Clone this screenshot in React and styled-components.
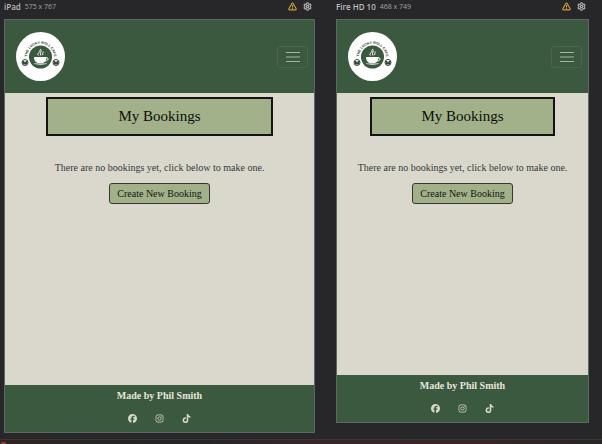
import React from 'react';
import styled, { createGlobalStyle } from 'styled-components';
import { FaFacebook, FaInstagram, FaTiktok } from 'react-icons/fa6';
import { LuTriangleAlert, LuSettings } from 'react-icons/lu';

const GlobalStyle = createGlobalStyle`
  *, *::before, *::after { box-sizing: border-box; }
  body { margin: 0; background: #272729; font-family: "Liberation Serif", serif; }
  h1, h2, p { margin: 0; }
  button { font: inherit; cursor: pointer; }
`;

const Workspace = styled.div`
  min-height: 100vh;
  display: flex;
  flex-direction: column;
  overflow: hidden;
`;

const Devices = styled.main`
  flex: 1;
  display: grid;
  grid-template-columns: 311fr 253fr;
  align-items: start;
  gap: 21px;
  padding: 0 13px 0 4px;
`;

const DeviceBar = styled.div`
  display: flex;
  align-items: center;
  height: 19px;
  padding: 0 3px 6px 0;
  font-family: "Open Sans", sans-serif;
  white-space: nowrap;
`;

const DeviceName = styled.h2`
  font-size: 8px;
  line-height: 12px;
  font-weight: 600;
  color: #bdbdbd;
`;

const DeviceSize = styled.span`
  margin-left: 4px;
  font-size: 7px;
  line-height: 12px;
  color: #a2a2a4;
`;

const DeviceActions = styled.div`
  display: flex;
  gap: 6px;
  margin-left: auto;
`;

const IconButton = styled.button`
  display: flex;
  padding: 0;
  border: 0;
  background: none;
  font-size: 9px;
  color: ${(p) => p.$color};

  svg { stroke-width: 3; }
`;

const Screen = styled.div`
  box-sizing: content-box;
  display: flex;
  flex-direction: column;
  aspect-ratio: ${(p) => p.$ratio};
  border: 1px solid #5d6960;
  background: #dad8cc;
`;

const Header = styled.header`
  display: flex;
  align-items: center;
  justify-content: space-between;
  padding: 12px 6px 12px 11px;
  background: #3a593f;
`;

const LogoLink = styled.a`
  display: block;
  width: 49px;
  height: 49px;
`;

const MenuButton = styled.button`
  display: flex;
  align-items: center;
  justify-content: center;
  width: 31px;
  height: 22px;
  padding: 0;
  border: 1px solid #49664d;
  border-radius: 3px;
  background: none;
  color: #a5b4a5;
`;

const Content = styled.section`
  flex: 1;
  display: flex;
  flex-direction: column;
  align-items: center;
  padding-top: 4px;
`;

const Title = styled.h1`
  box-sizing: content-box;
  width: 70%;
  padding: 8px 3px;
  border: 2px solid #111410;
  background: #a3b18a;
  color: #0b0e09;
  font-size: 15px;
  line-height: 19px;
  font-weight: 400;
  text-align: center;
`;

const Message = styled.p`
  margin: 24px 0 7px;
  font-size: 10px;
  line-height: 16px;
  color: #34383a;
  white-space: nowrap;
`;

const CreateButton = styled.button`
  padding: 2px 7px;
  border: 1px solid #34382f;
  border-radius: 3px;
  background: #a3b18a;
  color: #11150e;
  font-size: 10px;
  line-height: 15px;
`;

const Footer = styled.footer`
  display: flex;
  flex-direction: column;
  align-items: center;
  gap: 11px;
  padding: 3px 0 9px;
  background: #3a593f;
  color: #e6e6dc;
`;

const Credit = styled.p`
  font-size: 10px;
  line-height: 15px;
  font-weight: 700;
`;

const Socials = styled.nav`
  display: flex;
  gap: 18px;
`;

const SocialLink = styled.a`
  display: flex;
  font-size: 9px;
  color: #dad8cc;
`;

const StatusStrip = styled.div`
  display: flex;
  align-items: flex-end;
  height: 5px;
  padding-left: 1px;
  border-top: 1px solid #383638;
  background: linear-gradient(90deg, #2e2521, #252429 33%, #38252a 50%, #392524 80%, #292526);
`;

const StatusDot = styled.span`
  width: 5px;
  height: 2px;
  border-radius: 3px 3px 0 0;
  background: #b13a2e;
`;

function Logo({ id }) {
  return (
    <svg viewBox="0 0 98 98" width="100%" height="100%" role="img" aria-label="The Lucky Roll Cafe">
      <circle cx="49" cy="49" r="49" fill="#fff" />
      <circle cx="49" cy="50" r="23" fill="#3a593f" />
      <path id={id} d="M23 58 A27 27 0 1 1 75 58" fill="none" />
      <text fontFamily="Liberation Sans" fontSize="7" fontWeight="700" fill="#29332b" textAnchor="middle">
        <textPath href={`#${id}`} startOffset="50%">THE LUCKY ROLL CAFE</textPath>
      </text>
      <g fill="#fff">
        <path d="M36 50 H61 C61 56 59 60 54 62 H43 C38 60 36 56 36 50Z" />
        <path d="M60 52 C66 50 66 58 58 58" fill="none" stroke="#fff" strokeWidth="2" />
        <path d="M35 63 H63 C60 66 38 66 35 63Z" />
      </g>
      <path d="M45 47 C40 42 50 42 47 37 M50 47 C46 42 53 40 49 34 M54 46 C51 43 56 42 54 39" fill="none" stroke="#fff" strokeWidth="2" />
      {[18, 80].map((x) => (
        <g key={x}>
          <circle cx={x} cy="61" r="6" fill="#fff" stroke="#35483a" strokeWidth="2" />
          <path d={`M${x - 6} 58 l4 0 l2 3 l2 -3 l4 0 l-2 7 l-8 0z`} fill="#35483a" />
        </g>
      ))}
    </svg>
  );
}

function DevicePreview({ id, name, size, ratio }) {
  return (
    <article>
      <DeviceBar>
        <DeviceName>{name}</DeviceName>
        <DeviceSize>{size}</DeviceSize>
        <DeviceActions>
          <IconButton $color="#c6a13e" aria-label="Warnings"><LuTriangleAlert /></IconButton>
          <IconButton $color="#b2b2b4" aria-label="Settings"><LuSettings /></IconButton>
        </DeviceActions>
      </DeviceBar>
      <Screen $ratio={ratio}>
        <Header>
          <LogoLink href="#home"><Logo id={`${id}-ring`} /></LogoLink>
          <MenuButton aria-label="Toggle navigation">
            <svg width="14" height="12" viewBox="0 0 14 12" stroke="currentColor" strokeWidth="1">
              <path d="M0 1.5H14M0 6H14M0 10.5H14" />
            </svg>
          </MenuButton>
        </Header>
        <Content>
          <Title>My Bookings</Title>
          <Message>There are no bookings yet, click below to make one.</Message>
          <CreateButton>Create New Booking</CreateButton>
        </Content>
        <Footer>
          <Credit>Made by Phil Smith</Credit>
          <Socials>
            <SocialLink href="#facebook" aria-label="Facebook"><FaFacebook /></SocialLink>
            <SocialLink href="#instagram" aria-label="Instagram"><FaInstagram /></SocialLink>
            <SocialLink href="#tiktok" aria-label="TikTok"><FaTiktok /></SocialLink>
          </Socials>
        </Footer>
      </Screen>
    </article>
  );
}

export default function App() {
  return (
    <Workspace>
      <GlobalStyle />
      <Devices>
        <DevicePreview id="ipad" name="iPad" size="575 x 767" ratio="575 / 767" />
        <DevicePreview id="fire" name="Fire HD 10" size="468 x 749" ratio="468 / 749" />
      </Devices>
      <StatusStrip><StatusDot /></StatusStrip>
    </Workspace>
  );
}
